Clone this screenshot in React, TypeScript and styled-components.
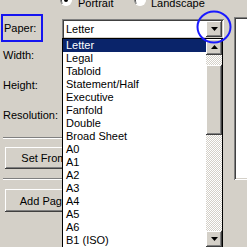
import styled, { createGlobalStyle } from "styled-components";

const paperSizes = [
  "Letter",
  "Legal",
  "Tabloid",
  "Statement/Half",
  "Executive",
  "Fanfold",
  "Double",
  "Broad Sheet",
  "A0",
  "A1",
  "A2",
  "A3",
  "A4",
  "A5",
  "A6",
  "B1 (ISO)",
];

const GlobalStyle = createGlobalStyle`
  html, body {
    margin: 0;
    padding: 0;
    background: #d4d0c8;
  }
  body {
    font-family: "Liberation Sans", Arial, sans-serif;
    font-size: 11px;
    color: #000;
  }
`;

const raisedEdge = `
  background: #d4d0c8;
  box-shadow: inset -1px -1px #404040, inset 1px 1px #ffffff,
    inset -2px -2px #808080, inset 2px 2px #d4d0c8;
`;

const ArrowIcon = ({ up }: { up?: boolean }) => (
  <svg width="7" height="4" viewBox="0 0 7 4">
    <polygon points={up ? "3.5,0 7,4 0,4" : "0,0 7,0 3.5,4"} fill="#000" />
  </svg>
);

export default function App() {
  return (
    <>
      <GlobalStyle />
      <Page>
        <RadioRow>
          <RadioItem $width={74} $gap={6}>
            <RadioCircle $checked />
            <RadioText>Portrait</RadioText>
          </RadioItem>
          <RadioItem $width={90} $gap={5}>
            <RadioCircle />
            <RadioText>Landscape</RadioText>
          </RadioItem>
        </RadioRow>

        <Main>
          <FormColumn>
            <PaperLabel>Paper:</PaperLabel>
            <Labels>
              <FieldLabel>Width:</FieldLabel>
              <FieldLabel>Height:</FieldLabel>
              <FieldLabel>Resolution:</FieldLabel>
            </Labels>
            <Separator $mt={15} />
            <PushButton $mt={8} $h={22}>Set From...</PushButton>
            <Separator $mt={9} />
            <PushButton $mt={9} $h={23}>Add Page...</PushButton>
          </FormColumn>

          <ComboWrap>
            <Combo>
              <ComboText>Letter</ComboText>
              <DropButton>
                <ArrowIcon />
              </DropButton>
            </Combo>
            <DropList>
              <Items>
                {paperSizes.map((size, i) => (
                  <Item key={size} $selected={i === 0}>
                    {size}
                  </Item>
                ))}
              </Items>
              <ScrollBar>
                <ScrollButton>
                  <ArrowIcon up />
                </ScrollButton>
                <Track $h={10} />
                <Thumb />
                <Track />
                <ScrollButton>
                  <ArrowIcon />
                </ScrollButton>
              </ScrollBar>
            </DropList>
          </ComboWrap>

          <Preview />
        </Main>

        <FocusRing width="37" height="35" viewBox="0 0 37 35">
          <ellipse cx="18" cy="17" rx="16.5" ry="15.5" fill="none" stroke="#1a1aff" strokeWidth="2" />
        </FocusRing>
      </Page>
    </>
  );
}

const Page = styled.div`
  position: relative;
  width: 247px;
  height: 247px;
  overflow: hidden;
  background: #d4d0c8;
`;

const RadioRow = styled.div`
  display: flex;
  height: 13px;
  margin-top: -6px;
  padding-left: 60px;
`;

const RadioItem = styled.div<{ $width: number; $gap: number }>`
  display: flex;
  align-items: flex-start;
  width: ${({ $width }) => $width}px;
  gap: ${({ $gap }) => $gap}px;
`;

const RadioCircle = styled.span<{ $checked?: boolean }>`
  position: relative;
  width: 12px;
  height: 12px;
  flex: none;
  box-sizing: border-box;
  border-radius: 50%;
  background: #fff;
  border: 1px solid;
  border-color: #808080 #ffffff #ffffff #808080;
  box-shadow: inset 1px 1px #404040;

  &::after {
    content: "";
    display: ${({ $checked }) => ($checked ? "block" : "none")};
    position: absolute;
    left: 3px;
    top: 3px;
    width: 4px;
    height: 4px;
    border-radius: 50%;
    background: #000;
  }
`;

const RadioText = styled.span`
  margin-top: 3px;
  line-height: 13px;
  white-space: nowrap;
`;

const Main = styled.div`
  display: grid;
  grid-template-columns: 62px 172px 1fr;
  align-items: start;
`;

const FormColumn = styled.div`
  display: flex;
  flex-direction: column;
  align-items: flex-start;
`;

const PaperLabel = styled.div`
  margin: 7px 0 0 1px;
  width: 42px;
  height: 28px;
  box-sizing: border-box;
  border: 2px solid #1515f0;
  padding-left: 1px;
  display: flex;
  align-items: center;
`;

const Labels = styled.div`
  display: flex;
  flex-direction: column;
  gap: 17px;
  margin-top: 7px;
`;

const FieldLabel = styled.div`
  height: 13px;
  line-height: 13px;
  padding-left: 3px;
  white-space: nowrap;
`;

const Separator = styled.div<{ $mt: number }>`
  margin: ${({ $mt }) => $mt}px 0 0 3px;
  width: 59px;
  border-top: 1px solid #808080;
  border-bottom: 1px solid #ffffff;
`;

const PushButton = styled.div<{ $mt: number; $h: number }>`
  margin: ${({ $mt }) => $mt}px 0 0 5px;
  width: 87px;
  height: ${({ $h }) => $h}px;
  flex: none;
  display: flex;
  align-items: center;
  justify-content: center;
  white-space: nowrap;
  background: #d4d0c8;
  box-shadow: inset -1px -1px #404040, inset 1px 1px #ffffff,
    inset -2px -2px #808080, inset 2px 2px #d4d0c8;
`;

const ComboWrap = styled.div`
  position: relative;
  margin-top: 12px;
  width: 162px;
  z-index: 1;
`;

const Combo = styled.div`
  height: 20px;
  box-sizing: border-box;
  padding: 2px;
  display: flex;
  align-items: stretch;
  background: #fff;
  box-shadow: inset 1px 1px #808080, inset -1px -1px #ffffff,
    inset 2px 2px #404040, inset -2px -2px #d4d0c8;
`;

const ComboText = styled.div`
  flex: 1;
  padding-left: 2px;
  line-height: 16px;
`;

const DropButton = styled.div`
  width: 16px;
  display: flex;
  align-items: center;
  justify-content: center;
  ${raisedEdge}
`;

const DropList = styled.div`
  position: absolute;
  top: 19px;
  left: 0;
  width: 161px;
  height: 210px;
  box-sizing: border-box;
  border: 1px solid #000;
  background: #fff;
  display: flex;
`;

const Items = styled.div`
  flex: 1;
  display: flex;
  flex-direction: column;
`;

const Item = styled.div<{ $selected?: boolean }>`
  height: 13px;
  line-height: 13px;
  padding-left: 3px;
  white-space: nowrap;
  overflow: hidden;
  background: ${({ $selected }) => ($selected ? "#0a246a" : "transparent")};
  color: ${({ $selected }) => ($selected ? "#fff" : "#000")};
`;

const ScrollBar = styled.div`
  width: 16px;
  display: flex;
  flex-direction: column;
`;

const ScrollButton = styled.div`
  height: 16px;
  flex: none;
  display: flex;
  align-items: center;
  justify-content: center;
  ${raisedEdge}
`;

const Track = styled.div<{ $h?: number }>`
  ${({ $h }) => ($h ? `height: ${$h}px; flex: none;` : "flex: 1;")}
  background: repeating-conic-gradient(#ffffff 0 25%, #d4d0c8 0 50%) 0 0 / 2px 2px;
`;

const Thumb = styled.div`
  height: 70px;
  flex: none;
  ${raisedEdge}
`;

const Preview = styled.div`
  margin-top: 10px;
  width: 30px;
  height: 163px;
  box-sizing: border-box;
  background: #fff;
  box-shadow: inset 1px 1px #808080, inset -1px -1px #ffffff,
    inset 2px 2px #404040, inset -2px -2px #d4d0c8;
`;

const FocusRing = styled.svg`
  position: absolute;
  left: 196px;
  top: 10px;
  z-index: 2;
`;
